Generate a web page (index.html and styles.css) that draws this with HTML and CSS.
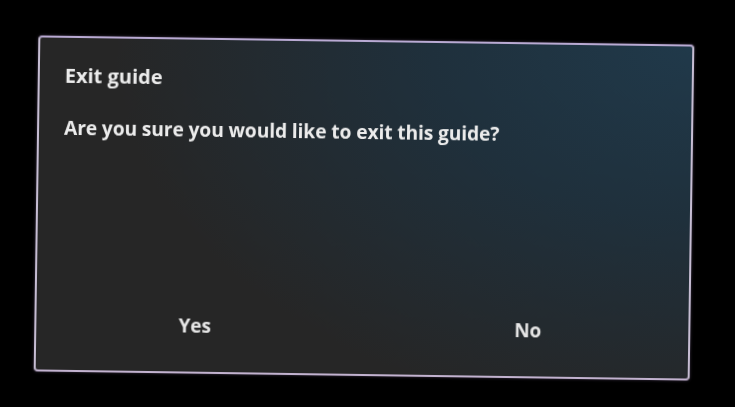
FILE: index.html
```html
<!DOCTYPE html>
<html lang="en">
<head>
<meta charset="utf-8">
<title>Exit guide</title>
<link rel="stylesheet" href="styles.css">
</head>
<body>
  <div class="dialog" role="dialog" aria-labelledby="dlg-title">
    <div class="content">
      <h1 class="title" id="dlg-title">Exit guide</h1>
      <p class="message">Are you sure you would like to exit this guide?</p>
    </div>
    <div class="actions">
      <button class="btn">Yes</button>
      <button class="btn">No</button>
    </div>
  </div>
</body>
</html>
```
FILE: styles.css
```css
html, body {
  margin: 0;
  padding: 0;
  background: #000;
  width: 735px;
  height: 407px;
  overflow: hidden;
}

body {
  font-family: "Open Sans", Lato, sans-serif;
}

.dialog {
  box-sizing: border-box;
  width: 656px;
  height: 336px;
  margin: 40px 0 0 36px;
  display: flex;
  flex-direction: column;
  border: 2px solid #c6bdd3;
  border-top-color: #b9aad3;
  border-bottom-color: #c2b2cf;
  border-radius: 4px;
  background:
    radial-gradient(ellipse 580px 380px at 100% 0%, #20394a 0%, #1f303c 45%, rgba(38,38,38,0) 100%),
    #262626;
  box-shadow: 0 0 3px rgba(190, 160, 220, 0.35);
  transform: rotate(0.8deg);
  filter: blur(0.45px);
  color: #ececec;
}

.content {
  flex: 1;
  padding: 24px 24px 0 25px;
}

.title {
  margin: 0;
  font-size: 20px;
  font-weight: 700;
  line-height: 28px;
  letter-spacing: 0;
}

.message {
  margin: 24px 0 0;
  font-size: 19.2px;
  font-weight: 700;
  line-height: 28px;
  letter-spacing: -0.1px;
}

.actions {
  display: flex;
  gap: 16px;
  padding: 0 2px 33px 0;
}

.btn {
  flex: 1;
  background: none;
  border: 0;
  color: #e6e6e6;
  font-family: inherit;
  font-size: 19px;
  font-weight: 700;
  line-height: 26px;
  padding: 0;
  cursor: pointer;
}
```
